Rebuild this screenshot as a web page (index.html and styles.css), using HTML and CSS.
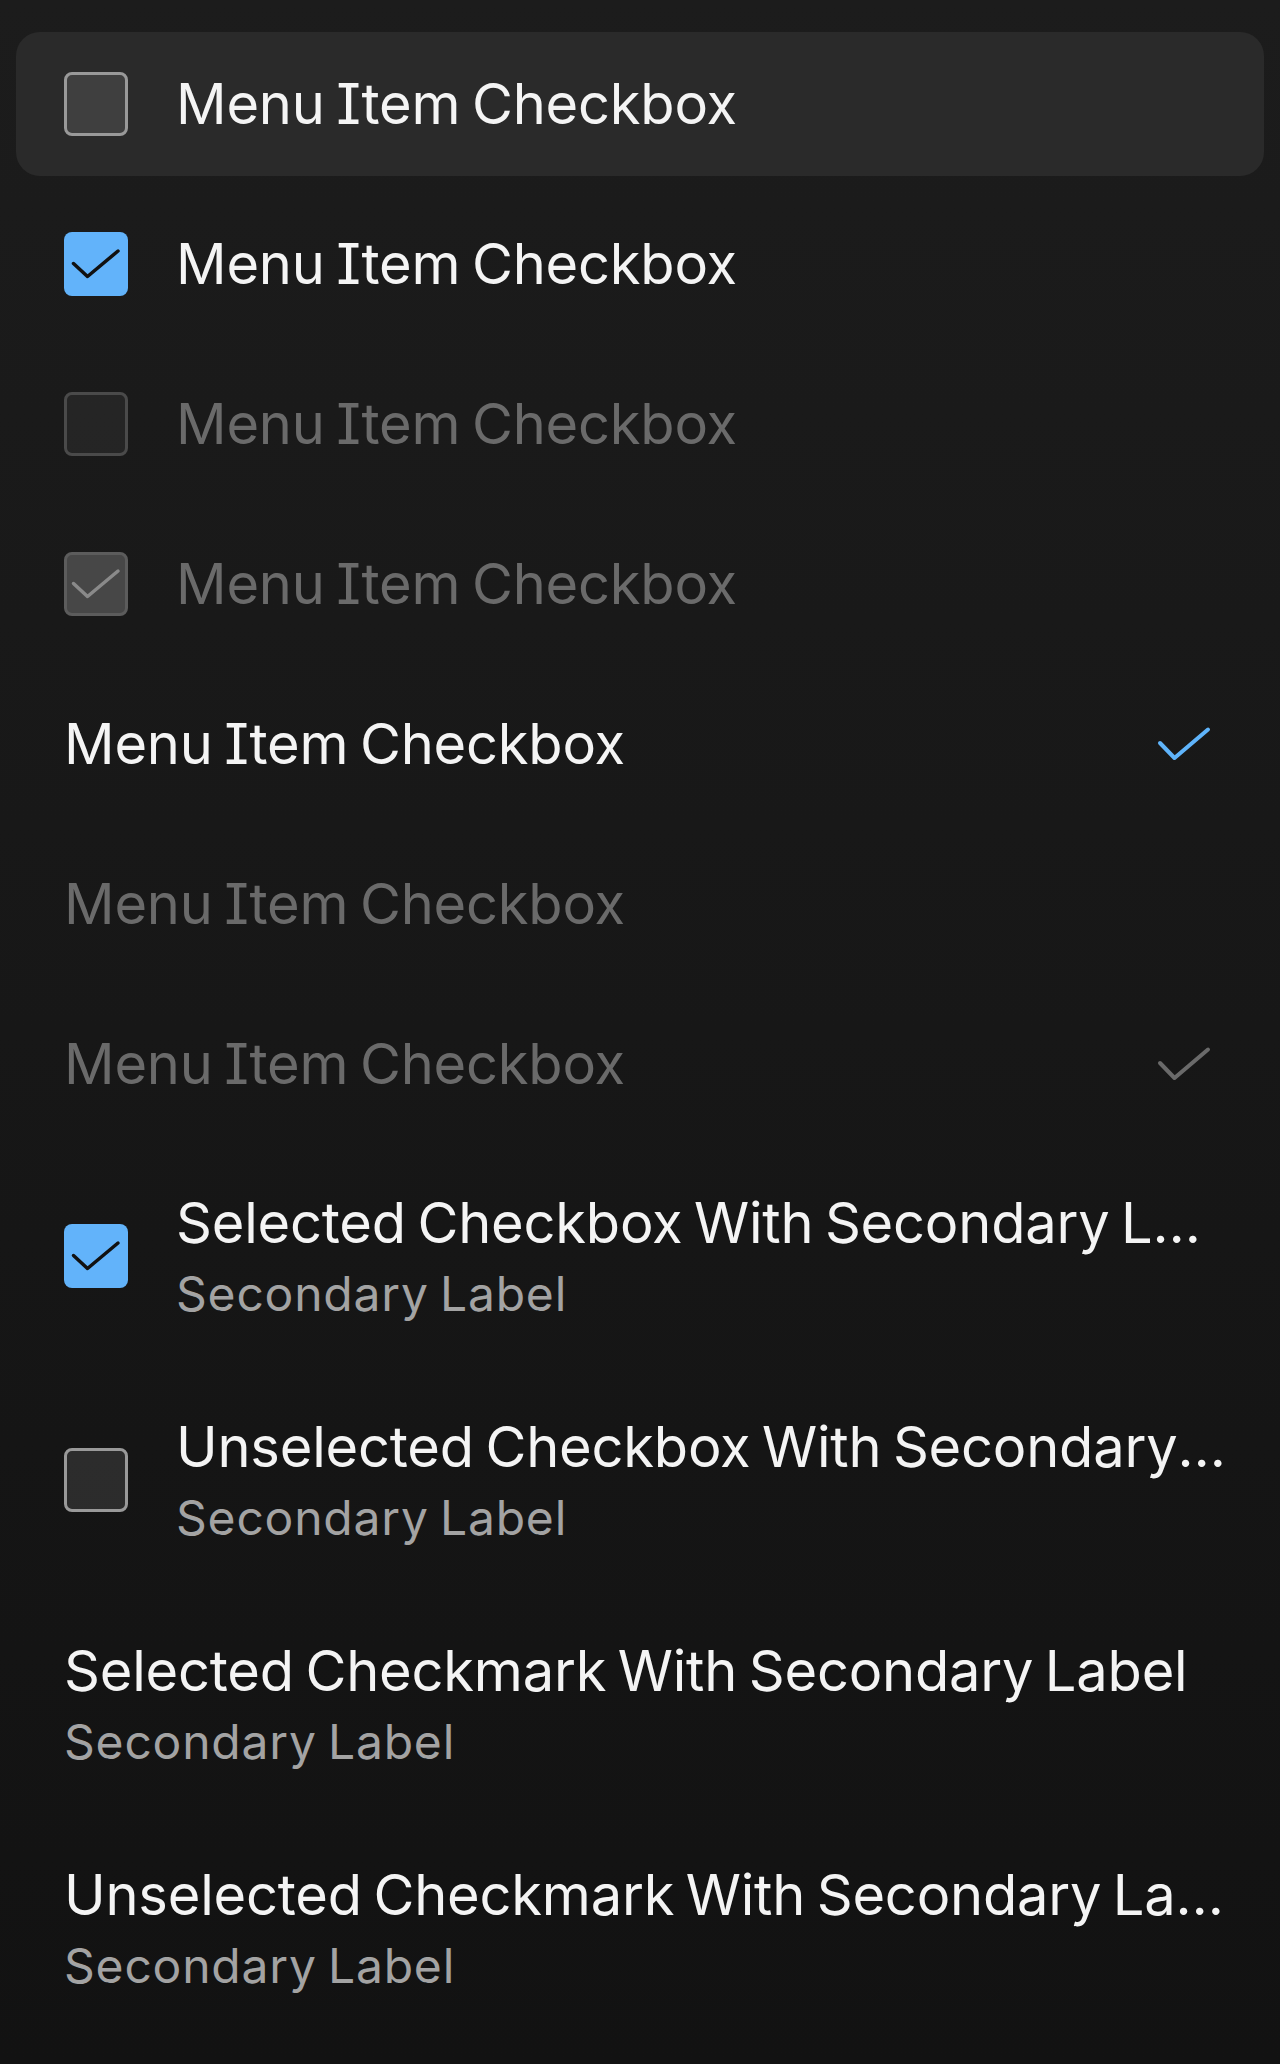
FILE: index.html
```html
<!DOCTYPE html>
<html lang="en">
<head>
<meta charset="utf-8">
<title>Menu Item Checkbox</title>
<link rel="stylesheet" href="styles.css">
</head>
<body>
<main class="menu">
  <div class="item item--hover">
    <span class="box box--off"></span>
    <span class="label">Menu Item Checkbox</span>
  </div>
  <div class="item">
    <span class="box box--on">
      <svg class="tick" viewBox="0 0 64 64"><path d="M9.5 31.5 L23.5 44.5 L54 19"/></svg>
    </span>
    <span class="label">Menu Item Checkbox</span>
  </div>
  <div class="item item--disabled">
    <span class="box box--off-disabled"></span>
    <span class="label">Menu Item Checkbox</span>
  </div>
  <div class="item item--disabled">
    <span class="box box--on-disabled">
      <svg class="tick" viewBox="0 0 64 64"><path d="M9.5 31.5 L23.5 44.5 L54 19"/></svg>
    </span>
    <span class="label">Menu Item Checkbox</span>
  </div>
  <div class="item item--plain">
    <span class="label">Menu Item Checkbox</span>
    <svg class="mark mark--on" viewBox="0 0 64 64"><path d="M8 31 L22.5 46 L56 17.5"/></svg>
  </div>
  <div class="item item--plain item--disabled">
    <span class="label">Menu Item Checkbox</span>
  </div>
  <div class="item item--plain item--disabled">
    <span class="label">Menu Item Checkbox</span>
    <svg class="mark mark--disabled" viewBox="0 0 64 64"><path d="M8 31 L22.5 46 L56 17.5"/></svg>
  </div>
  <div class="item item--two">
    <span class="box box--on">
      <svg class="tick" viewBox="0 0 64 64"><path d="M9.5 31.5 L23.5 44.5 L54 19"/></svg>
    </span>
    <span class="text">
      <span class="label">Selected Checkbox With Secondary Label</span>
      <span class="sub">Secondary Label</span>
    </span>
  </div>
  <div class="item item--two">
    <span class="box box--off"></span>
    <span class="text">
      <span class="label">Unselected Checkbox With Secondary Label</span>
      <span class="sub">Secondary Label</span>
    </span>
  </div>
  <div class="item item--two item--plain">
    <span class="text">
      <span class="label">Selected Checkmark With Secondary Label</span>
      <span class="sub">Secondary Label</span>
    </span>
  </div>
  <div class="item item--two item--plain">
    <span class="text">
      <span class="label">Unselected Checkmark With Secondary Label</span>
      <span class="sub">Secondary Label</span>
    </span>
  </div>
</main>
</body>
</html>
```

FILE: styles.css
```css
html, body {
  margin: 0;
  padding: 0;
}

body {
  background: linear-gradient(180deg, #1c1c1c 0%, #121212 100%);
  font-family: Inter, "Noto Sans", "Liberation Sans", sans-serif;
  font-feature-settings: "cv08";
  color: #f4f4f4;
  min-height: 2064px;
}

.menu {
  display: flex;
  flex-direction: column;
  gap: 16px;
  padding: 32px 16px;
}

.item {
  display: flex;
  align-items: center;
  gap: 48px;
  height: 144px;
  padding: 0 48px;
  border-radius: 24px;
  box-sizing: border-box;
  min-width: 0;
}

.item--hover {
  background: #2a2a2a;
}

.item--two {
  height: 208px;
  padding-right: 37px;
}

.label {
  font-size: 56px;
  line-height: 72px;
  letter-spacing: -0.2px;
  word-spacing: -4px;
  white-space: nowrap;
  overflow: hidden;
  text-overflow: ellipsis;
  min-width: 0;
  flex: 1 1 auto;
}

.item--disabled .label {
  color: #6a6a6a;
}

.text {
  display: flex;
  flex-direction: column;
  min-width: 0;
  flex: 1 1 auto;
}

.text .label {
  flex: none;
}

.sub {
  margin-top: 3px;
  font-size: 48px;
  line-height: 64px;
  letter-spacing: 0.8px;
  word-spacing: -3px;
  color: #a3a3a3;
  white-space: nowrap;
}

.box {
  flex: none;
  width: 64px;
  height: 64px;
  box-sizing: border-box;
  border-radius: 8px;
  display: flex;
}

.box--off {
  border: 3px solid #999999;
  background: rgba(255, 255, 255, 0.1);
}

.box--off-disabled {
  border: 3px solid #4a4a4a;
  background: rgba(255, 255, 255, 0.05);
}

.box--on {
  background: #62b3fa;
}

.box--on-disabled {
  border: 3px solid #5c5c5c;
  background: #474747;
}

.tick {
  width: 64px;
  height: 64px;
  flex: none;
  fill: none;
  stroke: #111111;
  stroke-width: 3.5;
  stroke-linecap: round;
  stroke-linejoin: round;
}

.box--on-disabled .tick {
  margin: -3px;
  stroke: #8a8a8a;
}

.mark {
  flex: none;
  width: 64px;
  height: 64px;
  fill: none;
  stroke-width: 4;
  stroke-linecap: round;
  stroke-linejoin: round;
}

.mark--on {
  stroke: #5fb4fb;
}

.mark--disabled {
  stroke: #6a6a6a;
}
```
